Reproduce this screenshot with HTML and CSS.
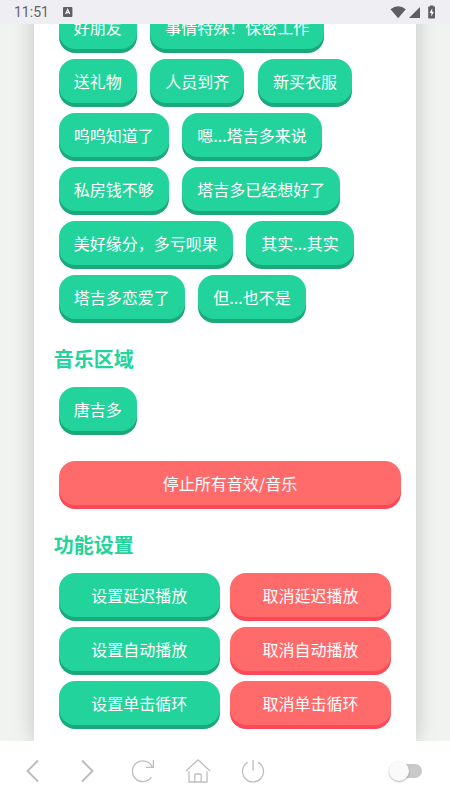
FILE: index.html
```html
<!DOCTYPE html>
<html lang="zh-CN">
<head>
  <meta charset="UTF-8" />
  <meta name="viewport" content="width=device-width, initial-scale=1.0" />
  <title>唐吉多音效</title>
  <link rel="stylesheet" href="styles.css">
</head>
<body>
  <header class="status-bar">
    <span class="time">11:51</span>
    <svg class="ime" width="10" height="10" viewBox="0 0 10 10">
      <rect width="9.4" height="10" rx="1" fill="#5f5f62"/>
      <path d="M2.6 7 L4.7 2.4 L6.8 7 M3.4 5.6 H6" fill="none" stroke="#fff" stroke-width="1.1"/>
    </svg>
    <svg class="signals" width="46" height="14" viewBox="0 0 46 14">
      <path d="M0.5 4.2 Q8.2 -1.8 15.8 4.2 L8.2 13.2 Z" fill="#5f5f62"/>
      <path d="M30 2 V13 H19 Z" fill="#5f5f62"/>
      <path d="M40 0.4 H43.4 V1.6 H45 V12.8 Q45 13.4 44.4 13.4 H38.8 Q38.2 13.4 38.2 12.8 V1.6 H40 Z" fill="#5f5f62"/>
      <path d="M42.2 3.2 L39.6 8 H41.3 V11.6 L43.9 6.8 H42.2 Z" fill="#fff"/>
    </svg>
  </header>

  <main class="page">
    <div class="container">
      <div class="button-list">
        <button class="btn">好朋友</button>
        <button class="btn">事情特殊！保密工作</button>
        <button class="btn">送礼物</button>
        <button class="btn">人员到齐</button>
        <button class="btn">新买衣服</button>
        <button class="btn">呜呜知道了</button>
        <button class="btn">嗯...塔吉多来说</button>
        <button class="btn">私房钱不够</button>
        <button class="btn">塔吉多已经想好了</button>
        <button class="btn">美好缘分，多亏呗果</button>
        <button class="btn">其实...其实</button>
        <button class="btn">塔吉多恋爱了</button>
        <button class="btn">但...也不是</button>
      </div>

      <h2>音乐区域</h2>
      <div class="button-list">
        <button class="btn">唐吉多</button>
      </div>

      <button class="btn red stop">停止所有音效/音乐</button>

      <h2>功能设置</h2>
      <div class="settings">
        <button class="btn">设置延迟播放</button>
        <button class="btn red">取消延迟播放</button>
        <button class="btn">设置自动播放</button>
        <button class="btn red">取消自动播放</button>
        <button class="btn">设置单击循环</button>
        <button class="btn red">取消单击循环</button>
      </div>
    </div>
  </main>

  <nav class="toolbar">
    <button class="tool" aria-label="后退">
      <svg width="28" height="28" viewBox="0 0 28 28"><path class="thick" d="M19 3.5 L8.5 14 L19 24.5"/></svg>
    </button>
    <button class="tool" aria-label="前进">
      <svg width="28" height="28" viewBox="0 0 28 28"><path class="thick" d="M8 3.5 L18.5 14 L8 24.5"/></svg>
    </button>
    <button class="tool" aria-label="刷新">
      <svg width="28" height="28" viewBox="0 0 28 28"><path d="M22.3 20.2 A10.4 10.4 0 1 1 23.4 10.3 M24.4 3 V10.3 H17"/></svg>
    </button>
    <button class="tool" aria-label="主页">
      <svg width="28" height="28" viewBox="0 0 28 28"><path d="M2 14 L14 2.8 L26 14 M5 14.3 V25 H23 V14.3 M10.8 25 V18.2 Q10.8 17 12 17 H16 Q17.2 17 17.2 18.2 V25"/></svg>
    </button>
    <button class="tool" aria-label="退出">
      <svg width="28" height="28" viewBox="0 0 28 28"><path d="M8.7 5.4 A10.5 10.5 0 1 0 19.3 5.4 M14 3 V13.4"/></svg>
    </button>
    <input type="checkbox" class="switch" aria-label="开关">
  </nav>
</body>
</html>
```
FILE: styles.css
```css
* {
  box-sizing: border-box;
}

body {
  margin: 0;
  height: 100vh;
  display: flex;
  flex-direction: column;
  font-family: "Noto Sans CJK SC", sans-serif;
  font-size: 16px;
  background-color: #f1f3f0;
}

button {
  border: none;
  font-family: inherit;
  cursor: pointer;
}

/* status bar */
.status-bar {
  flex: none;
  height: 24px;
  padding: 0 14px;
  display: flex;
  align-items: center;
  gap: 14px;
  background-color: #efeef3;
}

.time {
  font-family: Roboto, sans-serif;
  font-size: 14px;
  line-height: 24px;
  color: #636366;
}

.signals {
  margin-left: auto;
}

/* page, scrolled to the end */
.page {
  flex: 1;
  min-height: 0;
  overflow: hidden;
  display: flex;
  flex-direction: column;
  justify-content: flex-end;
}

.container {
  width: 85%;
  margin: 0 auto;
  padding: 20px 20px 11px;
  background-color: #fff;
  box-shadow: 0 0 20px rgba(0, 0, 0, 0.2);
}

h2 {
  margin: 20px 0 8px;
  font-size: 20px;
  line-height: 30px;
  color: #22d49b;
}

.button-list {
  line-height: 24px;
}

.btn {
  margin: 5px;
  padding: 10px 15px;
  font-size: 16px;
  line-height: 24px;
  color: #fff;
  background-color: #22d49b;
  border-radius: 16px;
  box-shadow: 0 4px 0 #1ba87b;
  vertical-align: top;
}

.red {
  background-color: #ff6b6b;
  box-shadow: 0 4px 0 #ff4757;
}

.stop {
  display: block;
  width: 100%;
  margin-top: 25px;
  margin-bottom: 25px;
}

.settings {
  display: grid;
  grid-template-columns: 1fr 1fr;
}

/* browser toolbar */
.toolbar {
  flex: none;
  height: 60px;
  padding: 0 28px 0 5px;
  display: flex;
  align-items: center;
  background-color: #fff;
}

.tool {
  width: 55px;
  height: 60px;
  padding: 0;
  display: flex;
  align-items: center;
  justify-content: center;
  background: none;
}

.tool path {
  fill: none;
  stroke: #bdbdbd;
  stroke-width: 1.3;
}

.tool .thick {
  stroke-width: 2;
}

.switch {
  appearance: none;
  position: relative;
  width: 32px;
  height: 14px;
  margin: 0 0 0 auto;
  border-radius: 7px;
  background-color: #c9c9c9;
}

.switch::before {
  content: "";
  position: absolute;
  top: -3px;
  left: -1px;
  width: 20px;
  height: 20px;
  border-radius: 50%;
  background-color: #fafafa;
  box-shadow: 0 1px 2px rgba(0, 0, 0, 0.3);
}

.switch:checked::before {
  left: 13px;
}
```
